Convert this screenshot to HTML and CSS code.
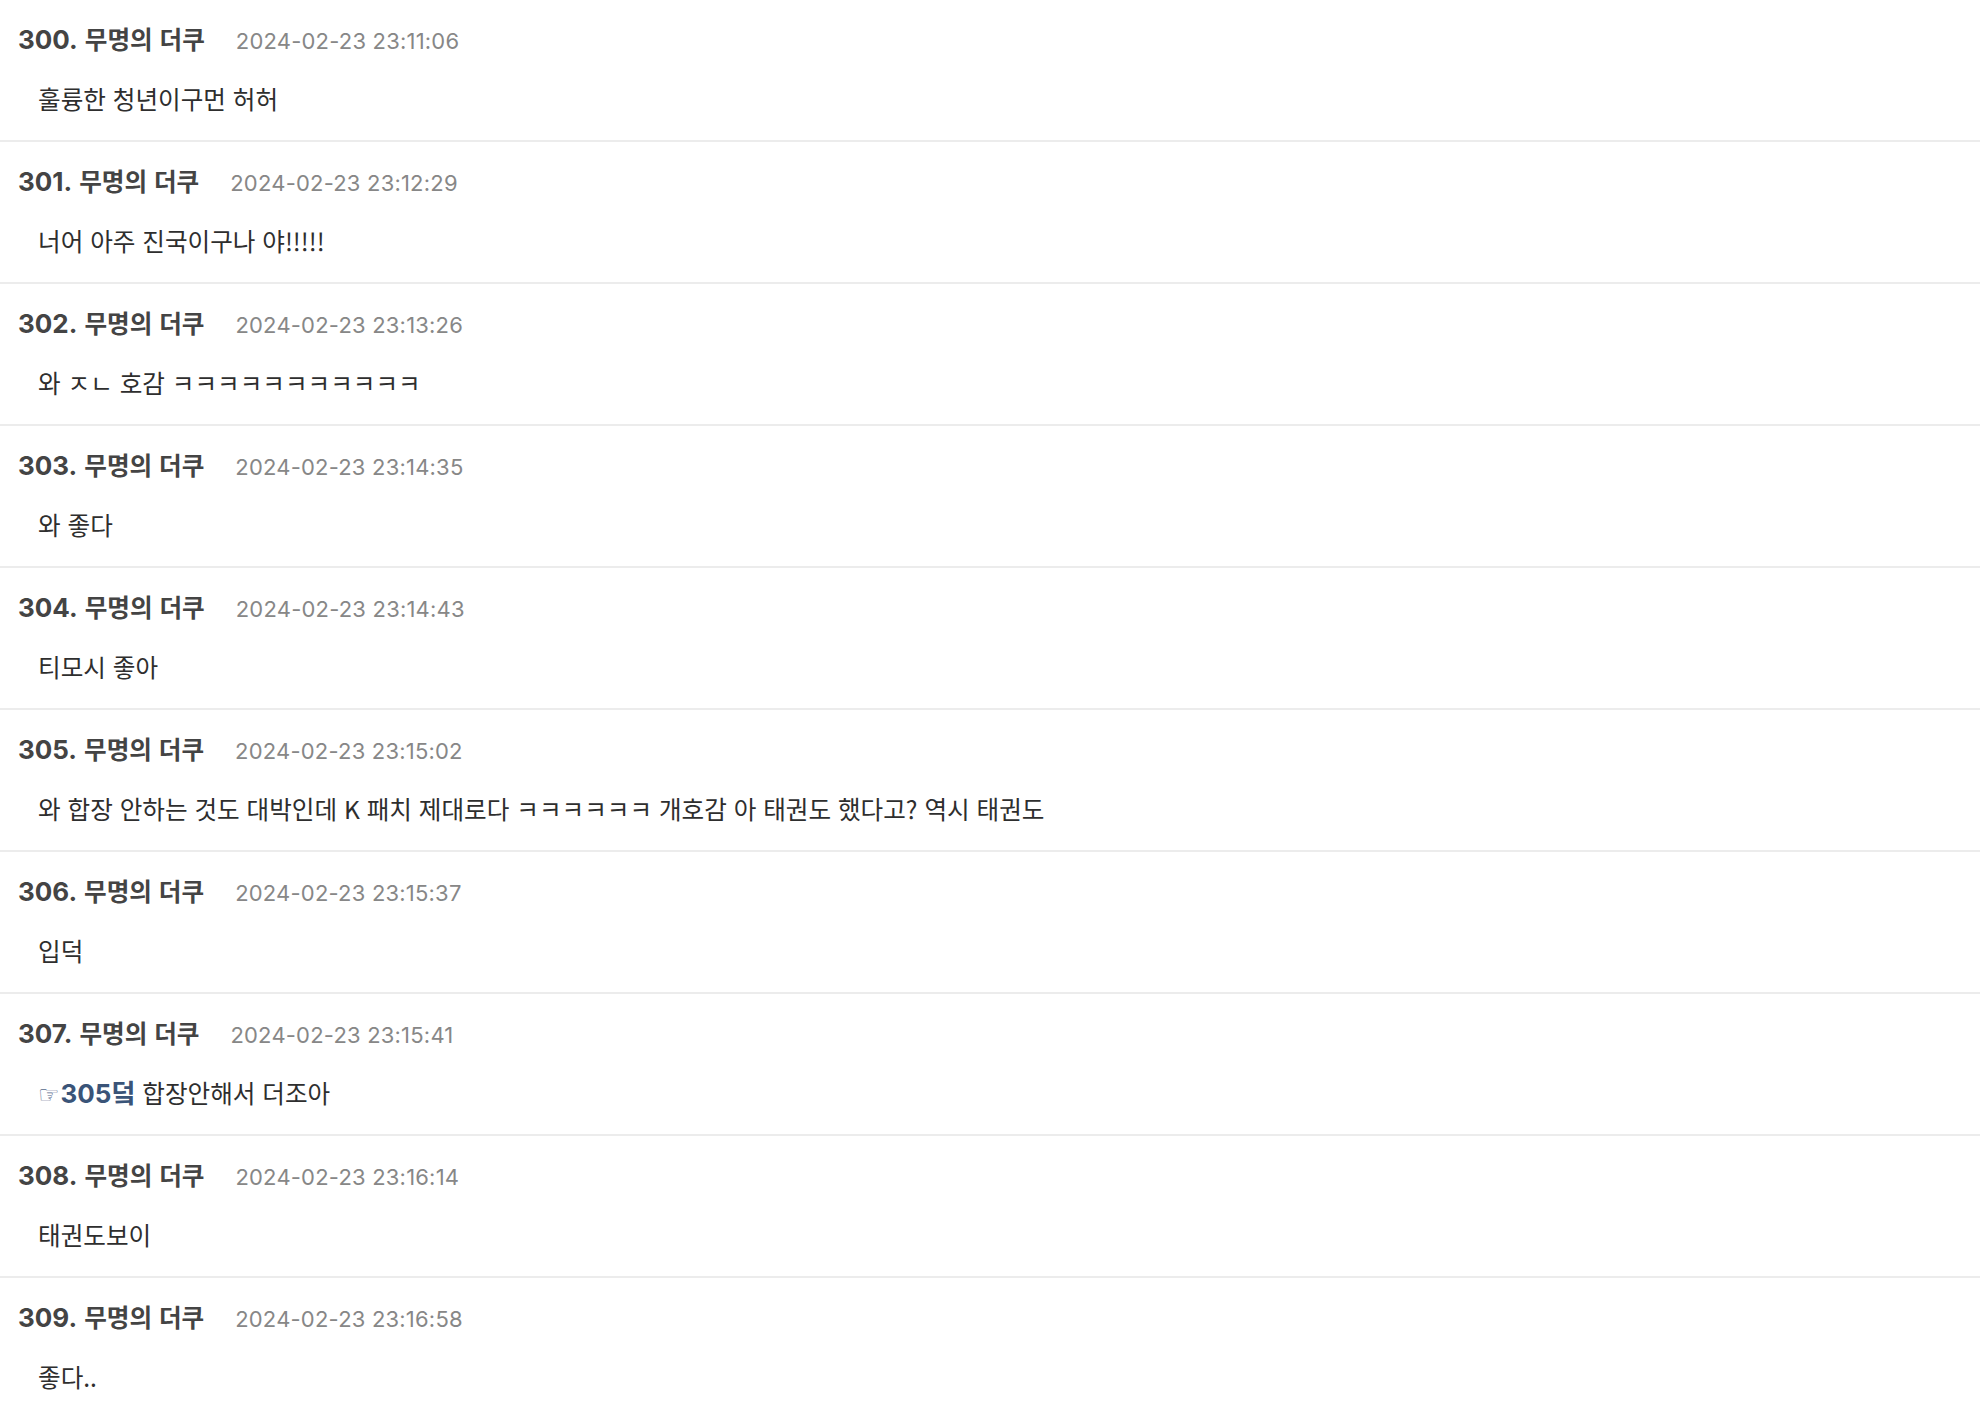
FILE: index.html
```html
<!DOCTYPE html>
<html lang="ko">
<head>
    <meta charset="UTF-8">
    <meta name="viewport" content="width=device-width, initial-scale=1.0">
    <title>댓글</title>
    <link rel="stylesheet" href="styles.css">
</head>
<body>
    <!-- 댓글 목록 -->
    <ul class="comment-list">
        <li class="comment">
            <div class="comment-head">
                <span class="comment-num">300.</span>
                <span class="comment-nick">무명의 더쿠</span>
                <span class="comment-date">2024-02-23 23:11:06</span>
            </div>
            <div class="comment-body">훌륭한 청년이구먼 허허</div>
        </li>
        <li class="comment">
            <div class="comment-head">
                <span class="comment-num">301.</span>
                <span class="comment-nick">무명의 더쿠</span>
                <span class="comment-date">2024-02-23 23:12:29</span>
            </div>
            <div class="comment-body">너어 아주 진국이구나 야!!!!!</div>
        </li>
        <li class="comment">
            <div class="comment-head">
                <span class="comment-num">302.</span>
                <span class="comment-nick">무명의 더쿠</span>
                <span class="comment-date">2024-02-23 23:13:26</span>
            </div>
            <div class="comment-body">와 ㅈㄴ 호감 ㅋㅋㅋㅋㅋㅋㅋㅋㅋㅋㅋ</div>
        </li>
        <li class="comment">
            <div class="comment-head">
                <span class="comment-num">303.</span>
                <span class="comment-nick">무명의 더쿠</span>
                <span class="comment-date">2024-02-23 23:14:35</span>
            </div>
            <div class="comment-body">와 좋다</div>
        </li>
        <li class="comment">
            <div class="comment-head">
                <span class="comment-num">304.</span>
                <span class="comment-nick">무명의 더쿠</span>
                <span class="comment-date">2024-02-23 23:14:43</span>
            </div>
            <div class="comment-body">티모시 좋아</div>
        </li>
        <li class="comment">
            <div class="comment-head">
                <span class="comment-num">305.</span>
                <span class="comment-nick">무명의 더쿠</span>
                <span class="comment-date">2024-02-23 23:15:02</span>
            </div>
            <div class="comment-body">와 합장 안하는 것도 대박인데 K 패치 제대로다 ㅋㅋㅋㅋㅋㅋ 개호감 아 태권도 했다고? 역시 태권도</div>
        </li>
        <li class="comment">
            <div class="comment-head">
                <span class="comment-num">306.</span>
                <span class="comment-nick">무명의 더쿠</span>
                <span class="comment-date">2024-02-23 23:15:37</span>
            </div>
            <div class="comment-body">입덕</div>
        </li>
        <li class="comment">
            <div class="comment-head">
                <span class="comment-num">307.</span>
                <span class="comment-nick">무명의 더쿠</span>
                <span class="comment-date">2024-02-23 23:15:41</span>
            </div>
            <div class="comment-body"><a class="reply-link" href="#"><span class="reply-hand">☞</span>305덬</a> 합장안해서 더조아</div>
        </li>
        <li class="comment">
            <div class="comment-head">
                <span class="comment-num">308.</span>
                <span class="comment-nick">무명의 더쿠</span>
                <span class="comment-date">2024-02-23 23:16:14</span>
            </div>
            <div class="comment-body">태권도보이</div>
        </li>
        <li class="comment">
            <div class="comment-head">
                <span class="comment-num">309.</span>
                <span class="comment-nick">무명의 더쿠</span>
                <span class="comment-date">2024-02-23 23:16:58</span>
            </div>
            <div class="comment-body">좋다..</div>
        </li>
    </ul>
</body>
</html>
```

FILE: styles.css
```css
:root {
    --line-color: #ececec;
    --head-color: #444444;
    --date-color: #878787;
    --text-color: #2e2e2e;
    --link-color: #3a5478;
}

body {
    margin: 0;
    background: #ffffff;
    font-family: Inter, "Noto Sans CJK KR", sans-serif;
    color: var(--text-color);
}

/* 댓글 목록 */
.comment-list {
    list-style: none;
    margin: 0;
    padding: 0;
}

.comment {
    height: 142px;
    box-sizing: border-box;
    padding: 20px 0 0 18px;
    border-bottom: 2px solid var(--line-color);
}

.comment-head {
    display: flex;
    align-items: baseline;
    height: 36px;
    line-height: 36px;
    color: var(--head-color);
    font-weight: 700;
}

.comment-num {
    font-size: 26px;
    margin-right: 7px;
}

.comment-nick {
    font-family: "Noto Sans CJK KR", sans-serif;
    font-size: 24.6px;
}

.comment-date {
    margin-left: 31px;
    font-size: 22px;
    font-weight: 400;
    letter-spacing: 0.2px;
    color: var(--date-color);
}

.comment-body {
    margin-top: 25px;
    padding-left: 20px;
    font-family: "Noto Sans CJK KR", sans-serif;
    font-size: 24.6px;
    line-height: 34px;
    white-space: nowrap;
}

/* 답글 링크 */
.reply-link {
    color: var(--link-color);
    font-family: Inter, "Noto Sans CJK KR", sans-serif;
    font-weight: 700;
    font-size: 26px;
    text-decoration: none;
}

.reply-hand {
    font-family: "DejaVu Sans", sans-serif;
    font-weight: 400;
    font-size: 24px;
    color: #56698a;
    margin-right: 1px;
}
```
